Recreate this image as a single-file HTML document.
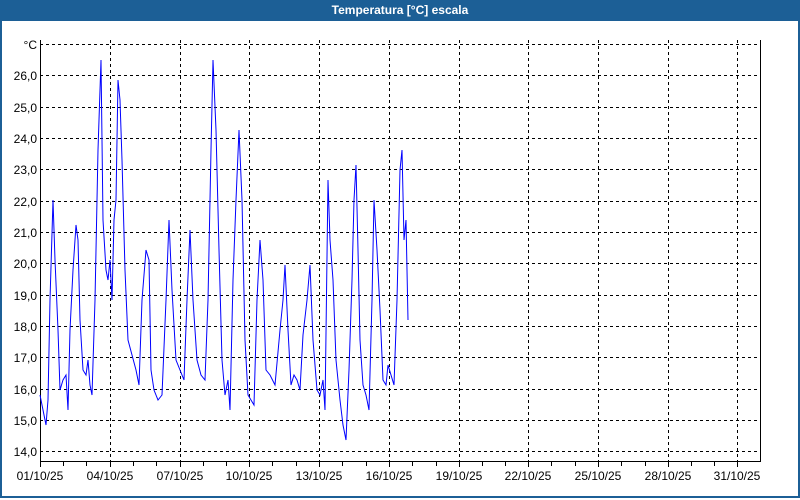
<!DOCTYPE html>
<html><head><style>
html,body{margin:0;padding:0;width:800px;height:500px;overflow:hidden;background:#fff;font-family:"Liberation Sans",sans-serif}
.win{position:absolute;left:0;top:0;width:796px;height:496px;border:2px solid #1c5f96;border-top:none}
.title{position:absolute;left:0;top:0;width:800px;height:21px;background:#1c5f96;color:#fff;font-weight:bold;font-size:12px;text-align:center;line-height:21px}
</style></head><body>
<div class="win"></div>
<div class="title">Temperatura [°C] escala</div>
<svg width="800" height="500" style="position:absolute;left:0;top:0" font-family="Liberation Sans, sans-serif" font-size="12" fill="#000">
<g stroke="#000" stroke-width="1" stroke-dasharray="3,3" fill="none">
<path d="M40 44.5H760M40 75.5H760M40 107.5H760M40 138.5H760M40 169.5H760M40 201.5H760M40 232.5H760M40 263.5H760M40 295.5H760M40 326.5H760M40 357.5H760M40 389.5H760M40 420.5H760M40 451.5H760"/>
<path d="M110.5 40V461M180.5 40V461M249.5 40V461M319.5 40V461M389.5 40V461M459.5 40V461M528.5 40V461M598.5 40V461M668.5 40V461M737.5 40V461"/>
</g>
<path d="M40.5 40V461.5H760.5V40" stroke="#000" fill="none"/>
<g stroke="#000"><path d="M63.5 461v5M86.5 461v5M133.5 461v5M156.5 461v5M203.5 461v5M226.5 461v5M272.5 461v5M296.5 461v5M342.5 461v5M366.5 461v5M412.5 461v5M436.5 461v5M482.5 461v5M505.5 461v5M551.5 461v5M575.5 461v5M621.5 461v5M645.5 461v5M691.5 461v5M714.5 461v5M40.5 461v6M110.5 461v6M180.5 461v6M249.5 461v6M319.5 461v6M389.5 461v6M459.5 461v6M528.5 461v6M598.5 461v6M668.5 461v6M737.5 461v6"/></g>
<g text-anchor="end">
<text x="37" y="49">°C</text><text x="37" y="80">26,0</text><text x="37" y="112">25,0</text><text x="37" y="143">24,0</text><text x="37" y="174">23,0</text><text x="37" y="206">22,0</text><text x="37" y="237">21,0</text><text x="37" y="268">20,0</text><text x="37" y="300">19,0</text><text x="37" y="331">18,0</text><text x="37" y="362">17,0</text><text x="37" y="394">16,0</text><text x="37" y="425">15,0</text><text x="37" y="456">14,0</text>
</g>
<g text-anchor="middle">
<text x="40" y="480">01/10/25</text><text x="110" y="480">04/10/25</text><text x="180" y="480">07/10/25</text><text x="249" y="480">10/10/25</text><text x="319" y="480">13/10/25</text><text x="389" y="480">16/10/25</text><text x="459" y="480">19/10/25</text><text x="528" y="480">22/10/25</text><text x="598" y="480">25/10/25</text><text x="668" y="480">28/10/25</text><text x="737" y="480">31/10/25</text>
</g>
<polyline fill="none" stroke="#0000ff" stroke-width="1" points="40,395 43,410 46,425 48,400 50,300 53,200 55,260 58,330 60,390 63,380 66,375 68,410 70,330 73,270 76,225 78,240 80,320 83,370 86,375 88,360 90,385 92,395 95,300 98,150 101,60 103,220 106,270 108,280 110,260 112,300 114,220 116,200 118,80 120,100 122,160 125,270 128,340 132,355 136,370 139,385 142,300 146,250 149,260 151,370 154,390 158,400 162,395 166,300 169,220 172,290 176,360 180,370 184,380 187,300 190,230 193,300 197,360 201,375 205,380 208,300 211,150 213,60 216,130 219,250 222,360 225,395 228,380 230,410 233,280 236,200 239,130 242,200 245,340 248,395 251,400 254,405 257,300 260,240 263,280 266,370 270,375 275,385 280,330 283,300 285,265 288,330 291,385 294,375 297,380 300,390 303,335 307,300 310,265 313,340 317,390 320,395 323,380 325,410 328,180 330,240 333,280 336,360 340,400 343,425 346,440 349,370 352,280 354,200 356,165 358,250 360,340 363,385 366,395 369,410 372,300 374,200 377,250 380,310 383,380 386,385 388,365 391,375 394,385 397,300 400,170 402,150 404,240 406,220 408,320"/>
</svg>
</body></html>
